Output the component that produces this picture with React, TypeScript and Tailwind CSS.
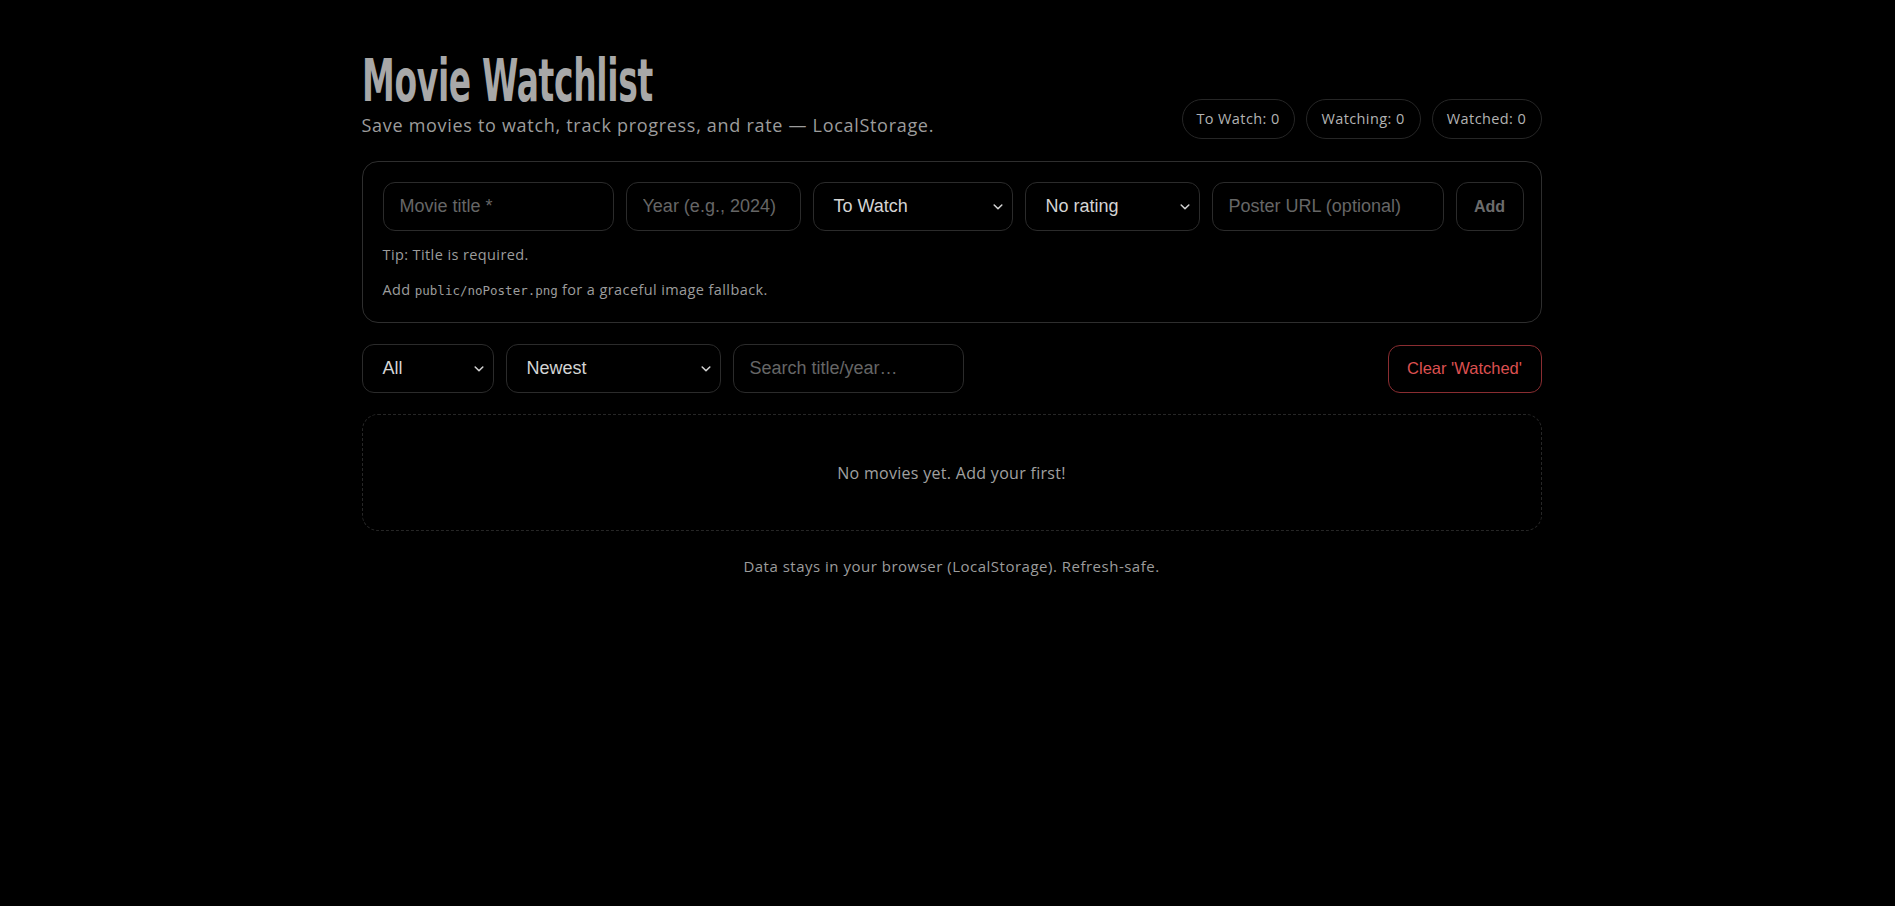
import React from "react";

const body = { fontFamily: '"Open Sans", "Noto Sans", sans-serif' };

function Chevron() {
  return (
    <svg className="pointer-events-none absolute right-[9px] top-1/2 -translate-y-1/2" width="10" height="7" viewBox="0 0 10 7" fill="none">
      <path d="M1.2 1.5 L5 5.2 L8.8 1.5" stroke="#d0d0d0" strokeWidth="1.6" strokeLinecap="round" strokeLinejoin="round" />
    </svg>
  );
}

function Select({ label, w }: { label: string; w: string }) {
  return (
    <div className={`relative h-[49px] shrink-0 ${w} rounded-[12px] border border-[#2b2b2b] bg-black`}>
      <div className="flex h-full items-center pl-5 text-[18px] text-[#d4d4d4]" style={{ fontFamily: '"Liberation Sans", Arial, sans-serif' }}>
        {label}
      </div>
      <Chevron />
    </div>
  );
}

function Input({ ph, w }: { ph: string; w: string }) {
  return (
    <input
      placeholder={ph}
      className={`h-[49px] shrink-0 ${w} rounded-[12px] border border-[#2b2b2b] bg-black px-4 text-[18px] text-[#ddd] outline-none placeholder:text-[#666]`}
      style={{ fontFamily: '"Liberation Sans", Arial, sans-serif' }}
    />
  );
}

function Pill({ text, w }: { text: string; w: string }) {
  return (
    <div className={`flex h-[40px] ${w} items-center justify-center rounded-full border border-[#262626] text-[14.5px] tracking-[0.4px] text-[#b3b3b3]`}>
      {text}
    </div>
  );
}

export default function App() {
  return (
    <div className="min-h-[906px] w-full bg-black" style={body}>
      <div className="flex justify-center pl-[8px]">
        <div className="w-[1180px] pt-[52px]">
          <header className="flex items-end justify-between">
            <div>
              <h1
                className="h-[58px] origin-left overflow-visible text-[59px] font-bold leading-[58px] tracking-[-0.5px] text-[#a8a8a8]"
                style={{ fontFamily: '"Liberation Sans Narrow", "Arial Narrow", "DejaVu Sans Condensed", sans-serif', transform: "scaleX(0.62)" }}
              >
                Movie Watchlist
              </h1>
              <p className="mb-[2px] mt-[3px] text-[18px] leading-[24px] tracking-[0.7px] text-[#9c9c9c]">
                Save movies to watch, track progress, and rate — LocalStorage.
              </p>
            </div>
            <div className="flex gap-[11px]">
              <Pill text="To Watch: 0" w="w-[113px]" />
              <Pill text="Watching: 0" w="w-[115px]" />
              <Pill text="Watched: 0" w="w-[110px]" />
            </div>
          </header>

          <section className="mt-[22px] h-[162px] rounded-[16px] border border-[#2e2e2e] px-5 pt-5">
            <div className="flex gap-[12px]">
              <Input ph="Movie title *" w="w-[231px]" />
              <Input ph="Year (e.g., 2024)" w="w-[175px]" />
              <Select label="To Watch" w="w-[200px]" />
              <Select label="No rating" w="w-[175px]" />
              <Input ph="Poster URL (optional)" w="w-[232px]" />
              <button
                className="h-[49px] w-[68px] shrink-0 rounded-[12px] border border-[#2b2b2b] bg-black text-[16px] font-bold text-[#6c6c6c]"
                style={{ fontFamily: '"Liberation Sans", Arial, sans-serif' }}
              >
                Add
              </button>
            </div>
            <p className="mt-[14px] text-[14.5px] leading-[20px] tracking-[0.4px] text-[#9c9c9c]">Tip: Title is required.</p>
            <p className="mt-[15px] text-[14.5px] leading-[20px] tracking-[0.4px] text-[#9c9c9c]">
              Add{" "}
              <code className="text-[12.5px] tracking-normal" style={{ fontFamily: '"DejaVu Sans Mono", "Liberation Mono", monospace' }}>
                public/noPoster.png
              </code>{" "}
              for a graceful image fallback.
            </p>
          </section>

          <div className="mt-[21px] flex items-center justify-between">
            <div className="flex gap-[12px]">
              <Select label="All" w="w-[132px]" />
              <Select label="Newest" w="w-[215px]" />
              <Input ph="Search title/year…" w="w-[231px]" />
            </div>
            <button
              className="h-[48px] w-[154px] rounded-[12px] border border-[#8a2d31] bg-black text-[16.5px] text-[#dc5050]"
              style={{ fontFamily: '"Liberation Sans", Arial, sans-serif' }}
            >
              Clear 'Watched'
            </button>
          </div>

          <div className="mt-[21px] flex h-[117px] items-center justify-center rounded-[16px] border border-dashed border-[#262626] text-[16px] tracking-[0.3px] text-[#a0a0a0]">
            No movies yet. Add your first!
          </div>

          <p className="mt-[24px] text-center text-[15px] leading-[22px] tracking-[0.5px] text-[#9c9c9c]">
            Data stays in your browser (LocalStorage). Refresh-safe.
          </p>
        </div>
      </div>
    </div>
  );
}
